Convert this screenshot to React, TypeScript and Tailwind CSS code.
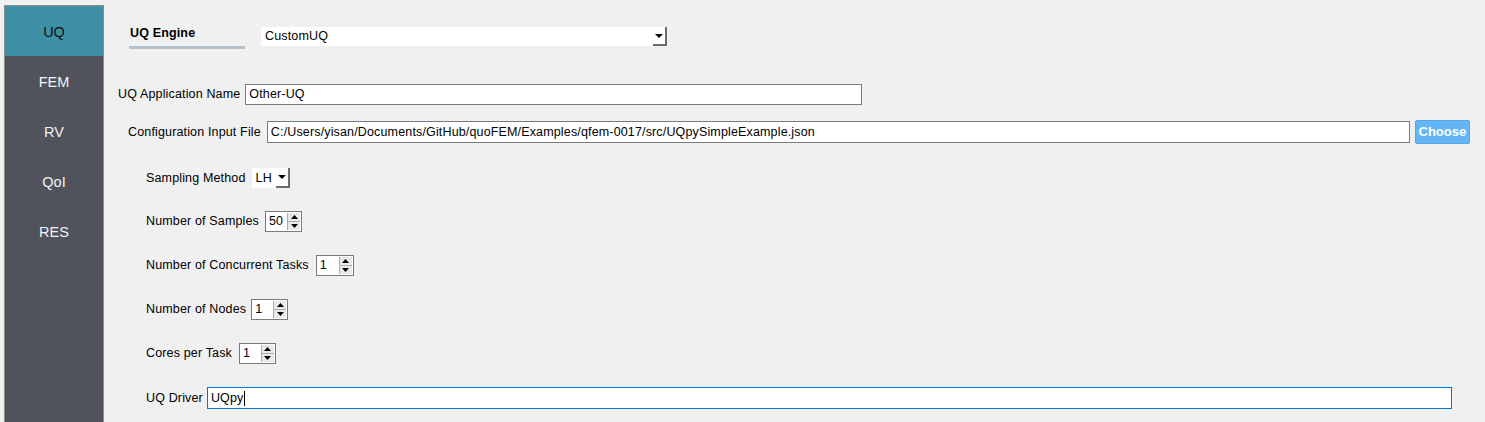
import React from "react";

const font = { fontFamily: '"Liberation Sans", Arial, sans-serif' };

function Spin({ value, w }: { value: string; w: string }) {
  return (
    <div className={`flex h-[21px] ${w} border border-[#7a7a7a] bg-white`}>
      <div className="flex-1 pl-[3px] leading-[19px] text-black">{value}</div>
      <div className="flex w-[13px] flex-col border-l border-[#adadad] bg-[#e9e9e9] my-[1px] mr-[1px]">
        <div className="flex flex-1 items-center justify-center border-b border-[#adadad]">
          <svg width="7" height="4" viewBox="0 0 7 4"><path d="M3.5 0 L7 4 L0 4 Z" fill="#000" /></svg>
        </div>
        <div className="flex flex-1 items-center justify-center">
          <svg width="7" height="4" viewBox="0 0 7 4"><path d="M0 0 L7 0 L3.5 4 Z" fill="#000" /></svg>
        </div>
      </div>
    </div>
  );
}

function ComboArrow() {
  return (
    <div className="flex h-full w-[14px] items-center justify-center border-r-2 border-b-2 border-[#6b6b6b] bg-white">
      <svg width="8" height="4" viewBox="0 0 8 4"><path d="M0 0 L8 0 L4 4 Z" fill="#000" /></svg>
    </div>
  );
}

export default function App() {
  const tabs = ["UQ", "FEM", "RV", "QoI", "RES"];
  return (
    <div className="flex h-[422px] w-[1485px] overflow-hidden bg-[#f0f0f0] text-[12.5px] tracking-[0.15px] text-black" style={font}>
      <div className="ml-[4px] mt-[5px] h-[430px] w-[100px] shrink-0 border border-[#8c8c8c] bg-[#50535b]">
        {tabs.map((t, i) => (
          <div
            key={t}
            className={`flex h-[50px] items-center justify-center pt-[3px] text-[14.5px] tracking-normal ${i === 0 ? "bg-[#3f8fa5] text-[#111]" : "text-[#f2f2f2]"}`}
          >
            {t}
          </div>
        ))}
      </div>

      <div className="flex flex-1 flex-col">
        {/* Header */}
        <div className="mt-[23px] flex items-start pl-[25px]">
          <div className="flex w-[116px] flex-col">
            <div className="h-[20px] pl-[1px] font-bold leading-[20px]">UQ Engine</div>
            <div className="mt-[3px] h-[3px] bg-[#b4c0c8]" />
          </div>
          <div className="ml-[16px] mt-[4px] flex h-[19px] w-[406px] items-center bg-white">
            <div className="flex-1 pl-[4px]">CustomUQ</div>
            <ComboArrow />
          </div>
        </div>

        {/* App name */}
        <div className="mt-[35px] flex h-[21px] items-center pl-[14px]">
          <span>UQ Application Name</span>
          <div className="ml-[5px] h-[21px] w-[617px] border border-[#7a7a7a] bg-white pl-[3px] leading-[19px]">Other-UQ</div>
        </div>

        {/* Config file */}
        <div className="mt-[15px] flex h-[24px] items-center pl-[24px]">
          <span>Configuration Input File</span>
          <div className="ml-[6px] h-[22px] w-[1143px] border border-[#7a7a7a] bg-white pl-[3px] leading-[20px]">
            C:/Users/yisan/Documents/GitHub/quoFEM/Examples/qfem-0017/src/UQpySimpleExample.json
          </div>
          <button className="ml-[5px] h-[24px] w-[55px] rounded-[2px] border border-[#5aa6e0] bg-[#64b5f6] text-[13px] font-bold tracking-normal text-white">
            Choose
          </button>
        </div>

        {/* Sampling method */}
        <div className="mt-[24px] flex h-[20px] items-center pl-[42px]">
          <span>Sampling Method</span>
          <div className="ml-[6px] flex h-[20px] w-[38px] items-center bg-white">
            <div className="flex-1 pl-[4px]">LH</div>
            <ComboArrow />
          </div>
        </div>

        <div className="mt-[23px] flex h-[21px] items-center pl-[42px]">
          <span>Number of Samples</span>
          <div className="ml-[6px]"><Spin value="50" w="w-[37px]" /></div>
        </div>

        <div className="mt-[23px] flex h-[21px] items-center pl-[42px]">
          <span>Number of Concurrent Tasks</span>
          <div className="ml-[7px]"><Spin value="1" w="w-[38px]" /></div>
        </div>

        <div className="mt-[23px] flex h-[21px] items-center pl-[42px]">
          <span>Number of Nodes</span>
          <div className="ml-[5px]"><Spin value="1" w="w-[37px]" /></div>
        </div>

        <div className="mt-[23px] flex h-[21px] items-center pl-[42px]">
          <span>Cores per Task</span>
          <div className="ml-[7px]"><Spin value="1" w="w-[37px]" /></div>
        </div>

        <div className="mt-[23px] flex h-[22px] items-center pl-[42px]">
          <span>UQ Driver</span>
          <div className="ml-[4px] flex h-[22px] w-[1245px] items-center border border-[#0078d7] bg-white pl-[3px]">
            <span>UQpy</span>
            <span className="ml-[1px] h-[15px] w-[1px] bg-black" />
          </div>
        </div>
      </div>
    </div>
  );
}
